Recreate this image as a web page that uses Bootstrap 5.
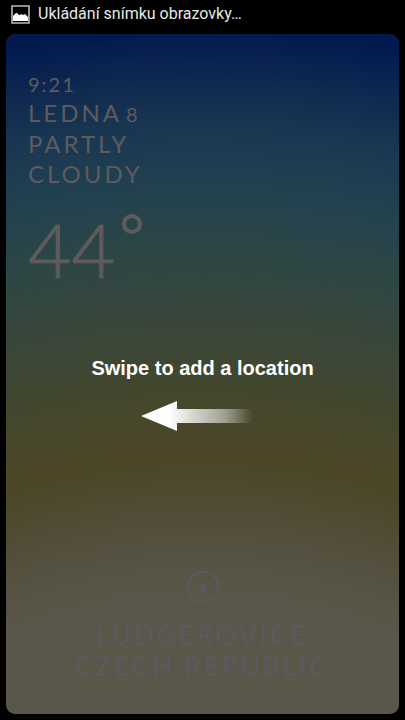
<!DOCTYPE html>
<html lang="cs">
<head>
<meta charset="utf-8">
<meta name="viewport" content="width=device-width, initial-scale=1">
<title>Weather</title>
<link href="https://cdn.jsdelivr.net/npm/bootstrap@5.3.0/dist/css/bootstrap.min.css" rel="stylesheet">
<style>
  body { background: #000; font-family: Lato, "Open Sans", sans-serif; }
  .status { height: 28px; padding: 0 11px; gap: 8px; font: 16px/26px Roboto, sans-serif; color: #e6e6e6; }
  .sky {
    margin: 6px; padding: 36px 22px 32px; border-radius: 9px; color: #5e5b5c;
    background: radial-gradient(circle 1066px at 50% 1066px,
      #595749 0, #595749 47%, #575445 50%, #534e3b 54%, #4e482c 58%, #4c4627 61%,
      #47472b 64%, #414730 68%, #39463a 73%, #2e4644 79%, #25434e 84%, #1b3a52 90%, #112b50 95%, #031a4f 100%);
  }
  .clock { font-size: 20px; line-height: 28px; letter-spacing: 2px; }
  .cond { font-size: 24px; line-height: 30px; letter-spacing: 3px; }
  .date { gap: 4px; }
  .day { font-size: 20px; letter-spacing: 0; }
  .temp { font-size: 75px; line-height: 90px; margin-top: 15px; font-weight: 300; gap: 7px; }
  .digits { -webkit-text-stroke: 1px currentColor; }
  .ring { width: 20px; height: 20px; border: 4px solid; border-radius: 50%; margin-top: 10px; }
  .hint { font: bold 20px/28px "Liberation Sans", Arial, sans-serif; color: #fff; margin-top: 60px; }
  .hint svg { margin-top: 18px; }
  .place { color: #5a595f; font-size: 26px; line-height: 31px; letter-spacing: 3px; }
  .place svg { margin-bottom: 16px; }
</style>
</head>
<body>
<div class="d-flex flex-column min-vh-100">
  <header class="status d-flex align-items-center">
    <svg width="19" height="19" viewBox="0 0 19 19" aria-hidden="true">
      <path d="M1 1h17v17H1z" fill="none" stroke="#bbb" stroke-width="1.6"/>
      <path d="M2 16V11l1-1 2-2 1 0 2 2 1 0 1-1 2 1 2-1 2 2 1 1V16z" fill="#fff"/>
    </svg>
    <span>Ukládání snímku obrazovky…</span>
  </header>
  <main class="sky d-flex flex-column flex-grow-1">
    <section>
      <div class="clock">9:21</div>
      <div class="cond">
        <div class="date d-flex align-items-baseline"><span>LEDNA</span><span class="day">8</span></div>
        <div>PARTLY</div>
        <div>CLOUDY</div>
      </div>
      <div class="temp d-flex"><span class="digits">44</span><span class="ring" role="img" aria-label="degrees"></span></div>
    </section>
    <section class="hint text-center">
      <div>Swipe to add a location</div>
      <svg class="d-block mx-auto" width="124" height="32" viewBox="0 0 124 32" aria-hidden="true">
        <defs><linearGradient id="fade" gradientUnits="userSpaceOnUse" x1="0" y1="0" x2="112" y2="0">
          <stop offset=".25" stop-color="#fff"/><stop offset=".4" stop-color="#fff" stop-opacity=".85"/>
          <stop offset=".75" stop-color="#fff" stop-opacity=".48"/><stop offset="1" stop-color="#fff" stop-opacity="0"/>
        </linearGradient></defs>
        <path d="M0 16 36 1V9H112V23H36V31z" fill="url(#fade)"/>
      </svg>
    </section>
    <footer class="place text-center mt-auto">
      <svg class="d-block mx-auto" width="34" height="34" viewBox="0 0 34 34" aria-hidden="true">
        <circle cx="17" cy="17" r="15.2" fill="none" stroke="currentColor" stroke-width="2.2"/>
        <path d="M17 10l4.5 13-4.5-3-4.5 3z" fill="currentColor"/>
      </svg>
      <div>LUDGEROVICE</div>
      <div>CZECH REPUBLIC</div>
    </footer>
  </main>
</div>
<script src="https://cdn.jsdelivr.net/npm/bootstrap@5.3.0/dist/js/bootstrap.bundle.min.js"></script>
</body>
</html>
